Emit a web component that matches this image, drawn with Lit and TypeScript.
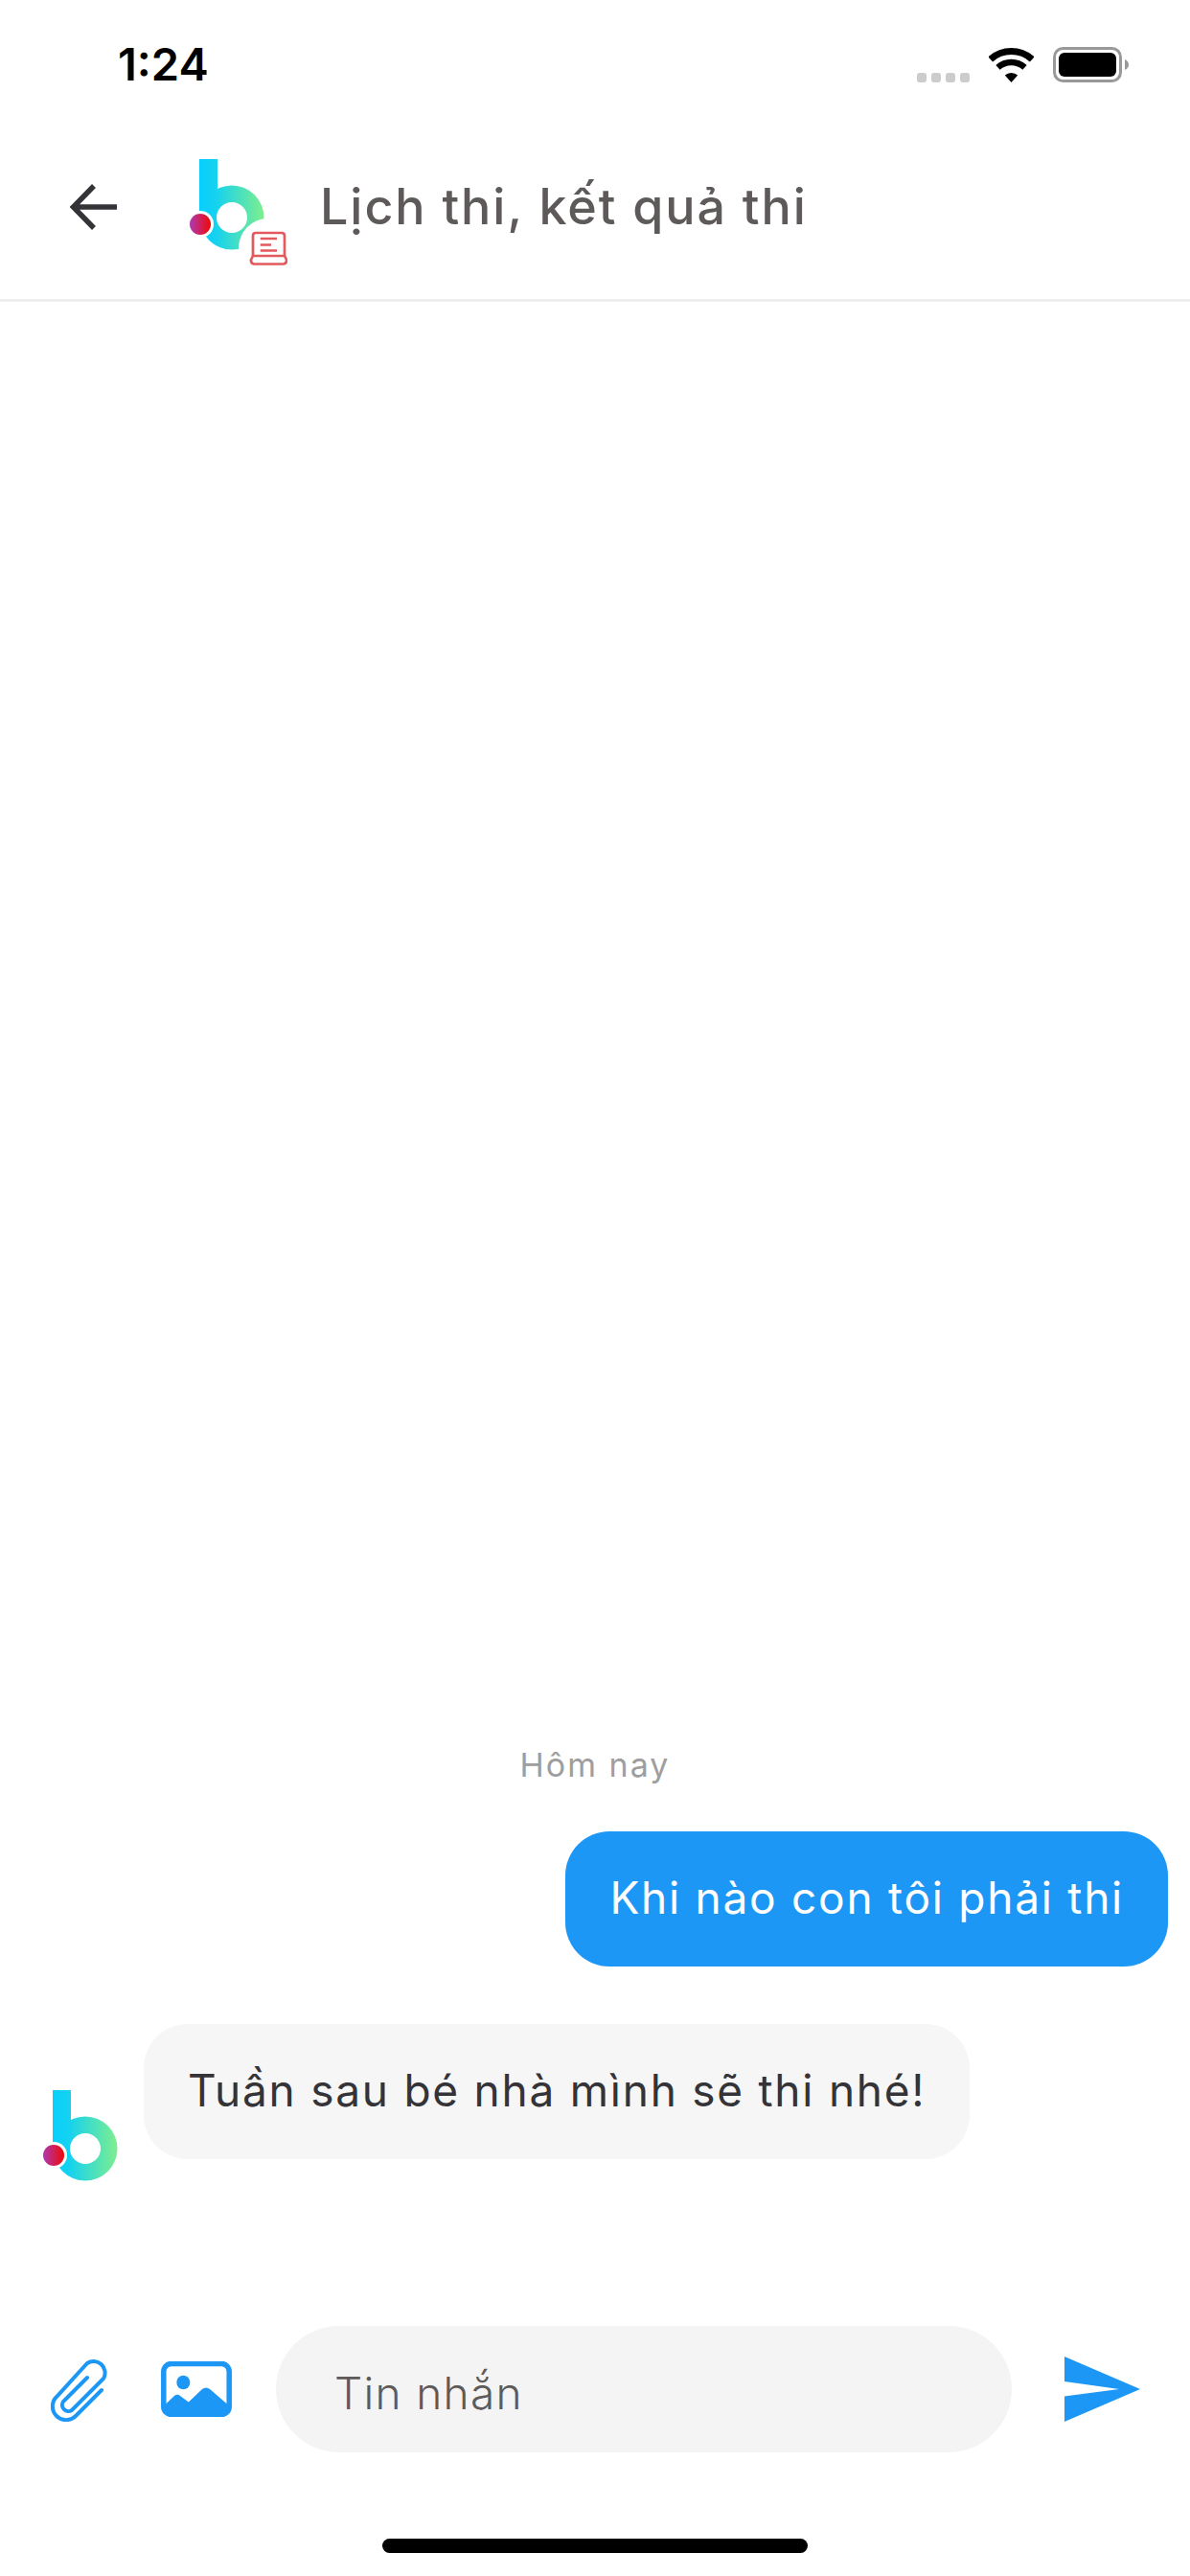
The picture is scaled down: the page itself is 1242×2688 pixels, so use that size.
import { LitElement, html, css, svg } from "lit";
import { customElement } from "lit/decorators.js";

// brand mark, same artwork in the header and next to incoming messages
const logoBody = (id: string, laptopCut: boolean) => svg`
    <defs>
        <linearGradient id="${id}-body" gradientUnits="userSpaceOnUse" x1="11" y1="0" x2="78.5" y2="0">
            <stop offset="0" stop-color="#08cffc"></stop>
            <stop offset="0.25" stop-color="#14d2f0"></stop>
            <stop offset="1" stop-color="#7eee8e"></stop>
        </linearGradient>
        <linearGradient id="${id}-dot" gradientUnits="userSpaceOnUse" x1="1" y1="0" x2="23" y2="0">
            <stop offset="0" stop-color="#ad3ab0"></stop>
            <stop offset="1" stop-color="#f00808"></stop>
        </linearGradient>
        <mask id="${id}-cut" maskUnits="userSpaceOnUse" x="0" y="0" width="103" height="111">
            <rect width="103" height="111" fill="#fff"></rect>
            <circle cx="45" cy="61" r="16" fill="#000"></circle>
            <circle cx="12" cy="68" r="14" fill="#000"></circle>
            ${laptopCut ? svg`<circle cx="83" cy="93" r="31" fill="#000"></circle>` : ""}
        </mask>
    </defs>
    <g mask="url(#${id}-cut)" fill="url(#${id}-body)">
        <rect x="11" y="0" width="19" height="62"></rect>
        <circle cx="45" cy="61" r="33.5"></circle>
    </g>
    <circle cx="12" cy="68" r="11" fill="url(#${id}-dot)"></circle>
`;

@customElement("app-root")
export class AppRoot extends LitElement
{
    static styles = css`
        :host
        {
            display     : block;
            width       : 1242px;
            height      : 2688px;
            background  : #fff;
            font-family : Inter, "Liberation Sans", sans-serif;
        }

        svg
        {
            display     : block;
            flex-shrink : 0;
        }

        .page
        {
            display        : flex;
            flex-direction : column;
            height         : 100%;
        }

        .status
        {
            display         : flex;
            justify-content : space-between;
            box-sizing      : border-box;
            height          : 132px;
            padding         : 49px 64px 0 123px;
        }

        .time
        {
            font-size   : 47px;
            font-weight : 600;
            line-height : 36px;
            color       : #000;
        }

        .status-icons
        {
            display     : flex;
            align-items : flex-end;
            gap         : 20px;
            height      : 37px;
        }

        .signal
        {
            display : flex;
            gap     : 5px;
        }

        .signal i
        {
            width         : 10px;
            height        : 10px;
            border-radius : 3px;
            background    : #ccc;
        }

        .header
        {
            display        : flex;
            align-items    : center;
            box-sizing     : border-box;
            height         : 183px;
            padding        : 0 0 13px 72px;
            border-bottom  : 3px solid #eee;
        }

        .back
        {
            margin-right : 75px;
        }

        .header-logo
        {
            margin : 11px 30px 0 0;
        }

        .title
        {
            font-size      : 52px;
            font-weight    : 500;
            letter-spacing : 1.950px;
            color          : #5f5a5a;
            white-space    : nowrap;
            padding-left   : 4px;
        }

        .chat
        {
            flex            : 1;
            display         : flex;
            flex-direction  : column;
            justify-content : flex-end;
        }

        .day
        {
            margin-bottom  : 49px;
            text-align     : center;
            font-size      : 34px;
            letter-spacing : 2px;
            line-height    : 40px;
            color          : #9e9e9e;
        }

        .bubble
        {
            box-sizing     : border-box;
            height         : 141px;
            border-radius  : 46px;
            padding        : 0 46px;
            font-size      : 46px;
            letter-spacing : 1.750px;
            line-height    : 139px;
            white-space    : nowrap;
        }

        .row-out
        {
            display         : flex;
            justify-content : flex-end;
            padding-right   : 23px;
            margin-bottom   : 60px;
        }

        .row-out .bubble
        {
            background : #1d97f5;
            color      : #fff;
        }

        .row-in
        {
            display     : flex;
            align-items : flex-start;
            padding     : 0 0 0 44px;
        }

        .row-in svg
        {
            margin : 69px 22px 0 0;
        }

        .row-in .bubble
        {
            background : #f6f6f6;
            color      : #333338;
        }

        .composer
        {
            display     : flex;
            align-items : center;
            margin-top  : 150px;
            height      : 132px;
            padding     : 0 52px 0 53px;
        }

        .clip
        {
            margin-right : 55px;
        }

        .picture
        {
            margin-right : 46px;
        }

        .field
        {
            box-sizing     : border-box;
            width          : 768px;
            height         : 132px;
            margin-right   : 55px;
            padding-left   : 61px;
            border-radius  : 66px;
            background     : #f4f4f4;
            font-size      : 46px;
            font-weight    : 300;
            letter-spacing : 1.300px;
            line-height    : 141px;
            color          : #5f5a5a;
        }

        .home
        {
            display         : flex;
            justify-content : center;
            padding         : 90px 0 24px;
        }

        .home i
        {
            width         : 444px;
            height        : 15px;
            border-radius : 8px;
            background    : #000;
        }
    `;

    render ()
    {
        return html`
            <div class="page">
                <div class="status">
                    <div class="time">1:24</div>
                    <div class="status-icons">
                        <div class="signal"><i></i><i></i><i></i><i></i></div>
                        <svg width="47" height="36" viewBox="0 0 47 36">
                            <path d="M1.8 11.9A32.5 32.5 0 0 1 45.2 11.9" fill="none" stroke="#000" stroke-width="7"></path>
                            <path d="M9.5 20.4A21 21 0 0 1 37.5 20.4" fill="none" stroke="#000" stroke-width="6.5"></path>
                            <path d="M23.5 36L16.8 28.6A10 10 0 0 1 30.2 28.6Z" fill="#000"></path>
                        </svg>
                        <svg width="79" height="37" viewBox="0 0 79 37">
                            <rect x="1.5" y="1.5" width="69" height="34" rx="9" fill="none" stroke="#999" stroke-width="3"></rect>
                            <rect x="6" y="6" width="60" height="25" rx="6" fill="#000"></rect>
                            <path d="M75 13C77.5 14 79 16 79 18.5C79 21 77.5 23 75 24Z" fill="#999"></path>
                        </svg>
                    </div>
                </div>

                <div class="header">
                    <svg class="back" width="50" height="50" viewBox="0 0 50 50">
                        <path d="M50 25H4M26 3L4.500 25L26 47" fill="none" stroke="#333338" stroke-width="5.500"></path>
                    </svg>
                    <svg class="header-logo" width="103" height="111" viewBox="0 0 103 111">
                        ${logoBody("head", true)}
                        <g fill="none" stroke="#e25a5e" stroke-width="2.700" stroke-linejoin="round">
                            <path d="M67 101V80Q67 77 70 77H97Q100 77 100 80V101"></path>
                            <path d="M67 101H100L102 105Q102.500 109 99 109.500H68Q64.500 109 65 105Z"></path>
                            <path d="M74.700 83H92M74.700 89.500H86M74.700 95.500H92"></path>
                        </g>
                    </svg>
                    <div class="title">Lịch thi, kết quả thi</div>
                </div>

                <div class="chat">
                    <div class="day">Hôm nay</div>
                    <div class="row-out">
                        <div class="bubble">Khi nào con tôi phải thi</div>
                    </div>
                    <div class="row-in">
                        <svg width="84" height="96" viewBox="0 0 84 96">${logoBody("msg", false)}</svg>
                        <div class="bubble">Tuần sau bé nhà mình sẽ thi nhé!</div>
                    </div>
                </div>

                <div class="composer">
                    <svg class="clip" width="60" height="68" viewBox="0 0 60 68">
                        <path d="M53 35L26 62A14.100 14.100 0 0 1 6 42L38 7A12 12 0 0 1 55 23L22 56A6.500 6.500 0 0 1 13 47L38 22"
                            fill="none" stroke="#1d97f5" stroke-width="4" stroke-linecap="round"></path>
                    </svg>
                    <svg class="picture" width="74" height="58" viewBox="0 0 74 58">
                        <rect x="2.800" y="2.500" width="68.400" height="53" rx="8" fill="none" stroke="#1d97f5" stroke-width="5.500"></rect>
                        <ellipse cx="23.300" cy="22" rx="7" ry="7.300" fill="#1d97f5"></ellipse>
                        <path d="M5 44.500L14 36Q17 33.500 20 36L28.800 42.500L43 29Q47 26 51 29L69 44.500V55H5Z" fill="#1d97f5"></path>
                    </svg>
                    <div class="field">Tin nhắn</div>
                    <svg width="79" height="68" viewBox="0 0 79 68">
                        <path d="M0 0L79 34L0 68V41.500L57 34L0 26Z" fill="#1d97f5"></path>
                    </svg>
                </div>

                <div class="home"><i></i></div>
            </div>
        `;
    }
}
